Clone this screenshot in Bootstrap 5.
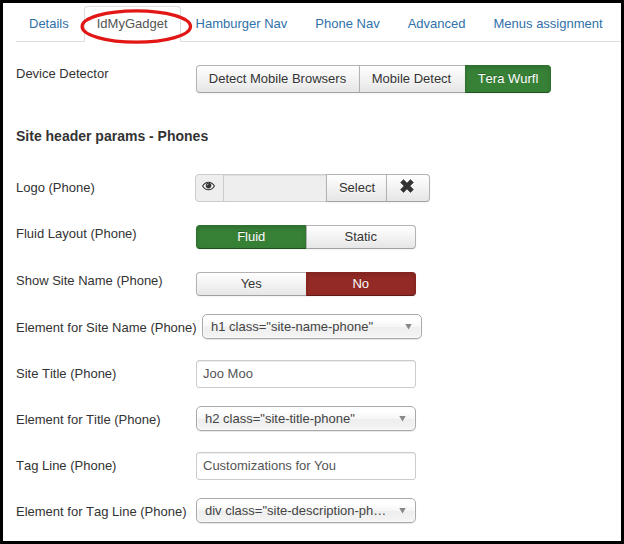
<!DOCTYPE html>
<html lang="en">
<head>
<meta charset="utf-8">
<title>IdMyGadget options</title>
<link href="https://cdn.jsdelivr.net/npm/bootstrap@5.3.0/dist/css/bootstrap.min.css" rel="stylesheet">
<style>
body{font:13px/18px "Liberation Sans",Arial,sans-serif;color:#333;background:#fff}
.frame{width:624px;height:544px;border:3px solid #000;padding:3px 0 0 13px}
.nav-tabs{height:36px;border-bottom:1px solid #ddd;--bs-nav-tabs-border-radius:4px;flex-wrap:nowrap}
.nav-tabs .nav-link{padding:8px 12px;margin:0 2px 0 0;color:#3071a9;height:36px;line-height:18px;white-space:nowrap;--bs-nav-link-font-size:13px}
.nav-tabs .nav-link.active{color:#555;border-color:#ddd #ddd #fff}
.ring{position:absolute;left:-5px;top:2px;width:114px;height:37px;z-index:2;pointer-events:none}
.field{height:46px}
.field-device{height:62px;margin-top:23px}
.field-logo{height:51px}
.field-tall{height:47px}
.field-short{height:42px}
.caption{width:180px;flex:none;white-space:nowrap;font-kerning:none}
.drop{padding-top:5px}
.section-title{font-size:14px;line-height:18px;font-weight:700;margin:0;height:47px}
.btn{--bs-btn-font-size:13px;--bs-btn-line-height:18px;--bs-btn-padding-x:12px;--bs-btn-padding-y:4px;--bs-btn-border-radius:4px;color:#333;border:1px solid #b3b3b3;border-bottom-color:#a2a2a2;background:linear-gradient(#fff,#e6e6e6);text-shadow:0 1px 1px rgba(255,255,255,.75);box-shadow:inset 0 1px 0 rgba(255,255,255,.2),0 1px 2px rgba(0,0,0,.05);white-space:nowrap}
.btn.tone-green,.btn.tone-red{color:#fff;text-shadow:0 -1px 0 rgba(0,0,0,.25);box-shadow:inset 0 2px 4px rgba(0,0,0,.15),0 1px 2px rgba(0,0,0,.05)}
.btn.tone-green{background:#378137;border-color:#2f722f #2f722f #205020}
.btn.tone-red{background:#942a25;border-color:#87241f #87241f #5f1916}
.tall-group{height:28px;width:355px}
.tall-group .btn{flex:none;padding-left:0;padding-right:1px;width:164px}
.tall-group .btn:nth-child(2){width:107px;padding-right:2px}
.tall-group .btn:nth-child(3){width:86px;padding-right:0;font-kerning:none}
.toggle{width:220px;height:24px}
.toggle .btn{width:50%;flex:1 1 50%;padding-top:2px;padding-bottom:2px}
.media{width:235px;height:28px;margin-left:-1px;flex:none}
.media .eye{width:29px;flex:none;padding:4px 6px;border:1px solid #ccc;border-radius:4px 0 0 4px;background:#eee}
.media .form-control{width:104px;flex:none;margin-left:-1px;border-radius:0;background:#eee}
.media .btn{margin-left:-1px;border-radius:0;flex:none;width:61px;padding-left:1px;padding-right:0}
.media .btn:last-child{border-radius:0 4px 4px 0;width:44px;padding:4px 0 6px 13px}
.media .btn svg{margin-top:-1px;margin-bottom:1px}
.form-control{width:220px;height:28px;padding:3px 6px 5px;font-size:13px;line-height:18px;color:#555;border:1px solid #ccc;border-radius:3px;box-shadow:inset 0 1px 1px rgba(0,0,0,.075)}
.chooser{width:220px;height:25px;padding:0 9px 0 8px;border:1px solid #aaa;border-radius:5px;color:#444;line-height:23px;background:linear-gradient(#fff 20%,#f6f6f6 50%,#eee 52%,#f4f4f4 100%);box-shadow:0 0 3px #fff inset,0 1px 1px rgba(0,0,0,.1)}
.arrow{width:7px;height:6px;background:#888;clip-path:polygon(0 0,100% 0,50% 100%)}
.indent{margin-left:6px}
svg{display:block}
</style>
<script src="https://cdn.jsdelivr.net/npm/bootstrap@5.3.0/dist/js/bootstrap.bundle.min.js"></script>
</head>
<body>
<main class="frame overflow-hidden">
<ul class="nav nav-tabs">
<li class="nav-item"><a class="nav-link" href="#">Details</a></li>
<li class="nav-item position-relative"><a class="nav-link active" href="#">IdMyGadget</a>
<svg class="ring" viewBox="0 0 114 37"><ellipse cx="57.300" cy="18.5" rx="54.2" ry="15.700" fill="none" stroke="#e31616" stroke-width="3.2"/></svg></li>
<li class="nav-item"><a class="nav-link" href="#">Hamburger Nav</a></li>
<li class="nav-item"><a class="nav-link" href="#">Phone Nav</a></li>
<li class="nav-item"><a class="nav-link" href="#">Advanced</a></li>
<li class="nav-item"><a class="nav-link" href="#">Menus assignment</a></li>
</ul>
<div class="field-device d-flex align-items-start">
<label class="caption">Device Detector</label>
<div class="btn-group tall-group"><button class="btn">Detect Mobile Browsers</button><button class="btn">Mobile Detect</button><button class="btn tone-green">Tera Wurfl</button></div>
</div>
<h3 class="section-title">Site header params - Phones</h3>
<div class="field-logo d-flex align-items-start">
<label class="caption drop">Logo (Phone)</label>
<div class="media d-flex">
<span class="eye"><svg width="14" height="14" viewBox="0 0 14 14"><path d="M.6 7C2.200 4.400 4.200 3.200 6.500 3.200S10.800 4.400 12.400 7C10.800 9.600 8.800 10.800 6.500 10.800S2.200 9.600.6 7Z" fill="#f8f8f8" stroke="#333" stroke-width="1.100"/><circle cx="6.500" cy="6.600" r="2.800" fill="#333"/><path d="M4.900 6.500C5 5.600 5.600 5.100 6.500 5" fill="none" stroke="#ddd" stroke-width=".8"/></svg></span>
<input class="form-control" type="text" readonly aria-label="Logo">
<button class="btn">Select</button>
<button class="btn" aria-label="Clear"><svg width="14" height="14" viewBox="0 0 14 14"><path d="M3.500.5 7 4 10.500.5 13.500 3.500 10 7 13.500 10.500 10.500 13.500 7 10 3.500 13.500.5 10.500 4 7 .5 3.500Z" fill="#333" stroke="#333" stroke-width=".5" stroke-linejoin="round"/></svg></button>
</div>
</div>
<div class="field-tall d-flex align-items-start">
<label class="caption">Fluid Layout (Phone)</label>
<div class="btn-group toggle"><button class="btn tone-green">Fluid</button><button class="btn">Static</button></div>
</div>
<div class="field-short d-flex align-items-start">
<label class="caption">Show Site Name (Phone)</label>
<div class="btn-group toggle"><button class="btn">Yes</button><button class="btn tone-red">No</button></div>
</div>
<div class="field d-flex align-items-start">
<label class="caption drop">Element for Site Name (Phone)</label>
<div class="chooser indent d-flex align-items-center"><span class="flex-grow-1">h1 class="site-name-phone"</span><i class="arrow"></i></div>
</div>
<div class="field d-flex align-items-start">
<label class="caption drop">Site Title (Phone)</label>
<input class="form-control" type="text" value="Joo Moo">
</div>
<div class="field d-flex align-items-start">
<label class="caption drop">Element for Title (Phone)</label>
<div class="chooser d-flex align-items-center"><span class="flex-grow-1">h2 class="site-title-phone"</span><i class="arrow"></i></div>
</div>
<div class="field d-flex align-items-start">
<label class="caption drop">Tag Line (Phone)</label>
<input class="form-control" type="text" value="Customizations for You">
</div>
<div class="field d-flex align-items-start">
<label class="caption drop">Element for Tag Line (Phone)</label>
<div class="chooser d-flex align-items-center"><span class="flex-grow-1">div class="site-description-ph…</span><i class="arrow"></i></div>
</div>
</main>
</body>
</html>
